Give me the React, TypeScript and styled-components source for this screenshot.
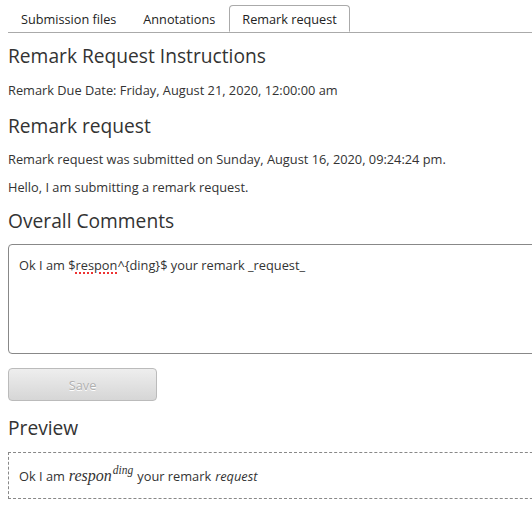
import React from "react";
import styled, { createGlobalStyle } from "styled-components";

const Global = createGlobalStyle`
  html, body { margin: 0; padding: 0; background: #fff; overflow: hidden; }
  body { font-family: "Open Sans", "Noto Sans", sans-serif; color: #333; }
`;

const Page = styled.div`
  width: 600px;
  padding: 5px 0 0 8px;
  box-sizing: border-box;
`;

const TabBar = styled.div`
  display: flex;
  border-bottom: 1px solid #aaa;
  height: 27px;
  width: 560px;
`;

const Tab = styled.div<{ $active?: boolean }>`
  font-size: 12.7px;
  line-height: 26px;
  padding: 0 12px;
  margin-right: 1px;
  color: #222;
  border: 1px solid ${(p) => (p.$active ? "#aaa" : "transparent")};
  border-bottom: ${(p) => (p.$active ? "1px solid #fff" : "none")};
  border-radius: 4px 4px 0 0;
  background: #fff;
  height: 27px;
  box-sizing: border-box;
  margin-bottom: -1px;
`;

const Heading = styled.h2`
  font-size: 19.2px;
  font-weight: 400;
  margin: 0;
  line-height: 27px;
  color: #333;
`;

const Text = styled.p`
  font-size: 12.8px;
  line-height: 18px;
  margin: 0;
  color: #333;
`;

const Editor = styled.div`
  width: 560px;
  height: 110px;
  box-sizing: border-box;
  border: 1px solid #888;
  border-radius: 4px;
  padding: 11px 10px;
  font-size: 12.8px;
  line-height: 18px;
  color: #333;
`;

const Misspelled = styled.span`
  text-decoration: underline dotted #e33;
  text-decoration-thickness: 2px;
  text-underline-offset: 2px;
`;

const SaveButton = styled.button`
  width: 149px;
  height: 33px;
  border: 1px solid #bbb;
  border-radius: 4px;
  background: linear-gradient(#eeeeee, #d6d6d6);
  color: #b0b0b0;
  text-shadow: 0 1px 0 #fff;
  font-family: "Open Sans", sans-serif;
  font-size: 12.8px;
  padding: 0;
`;

const PreviewBox = styled.div`
  width: 560px;
  height: 47px;
  box-sizing: border-box;
  border: 1px dashed #888;
  padding: 0 10px;
  display: flex;
  align-items: center;
  font-size: 12.8px;
  color: #333;
`;

const MathVar = styled.span`
  font-family: "Liberation Serif", "DejaVu Serif", serif;
  font-style: italic;
  font-size: 16px;
  margin: 0 4px 0 4px;
`;

const Sup = styled.sup`
  font-size: 11.5px;
  vertical-align: 7px;
  line-height: 0;
  margin-left: 1px;
`;

const Em = styled.em`
  font-style: italic;
  margin-left: 4px;
`;

const Stack = styled.div<{ $gap: number }>`
  display: flex;
  flex-direction: column;
  align-items: flex-start;
  margin-top: ${(p) => p.$gap}px;
`;

export default function App() {
  return (
    <Page>
      <Global />
      <TabBar>
        <Tab>Submission files</Tab>
        <Tab>Annotations</Tab>
        <Tab $active>Remark request</Tab>
      </TabBar>
      <Stack $gap={9}>
        <Heading>Remark Request Instructions</Heading>
      </Stack>
      <Stack $gap={12}>
        <Text>Remark Due Date: Friday, August 21, 2020, 12:00:00 am</Text>
      </Stack>
      <Stack $gap={13}>
        <Heading>Remark request</Heading>
      </Stack>
      <Stack $gap={11}>
        <Text>Remark request was submitted on Sunday, August 16, 2020, 09:24:24 pm.</Text>
      </Stack>
      <Stack $gap={10}>
        <Text>Hello, I am submitting a remark request.</Text>
      </Stack>
      <Stack $gap={11}>
        <Heading>Overall Comments</Heading>
      </Stack>
      <Stack $gap={10}>
        <Editor>
          Ok I am $<Misspelled>respon</Misspelled>^{"{ding}"}$ your remark _request_
        </Editor>
      </Stack>
      <Stack $gap={14}>
        <SaveButton disabled>Save</SaveButton>
      </Stack>
      <Stack $gap={13}>
        <Heading>Preview</Heading>
      </Stack>
      <Stack $gap={11}>
        <PreviewBox>
          Ok I am
          <MathVar>
            respon<Sup>ding</Sup>
          </MathVar>
          your remark<Em>request</Em>
        </PreviewBox>
      </Stack>
    </Page>
  );
}
